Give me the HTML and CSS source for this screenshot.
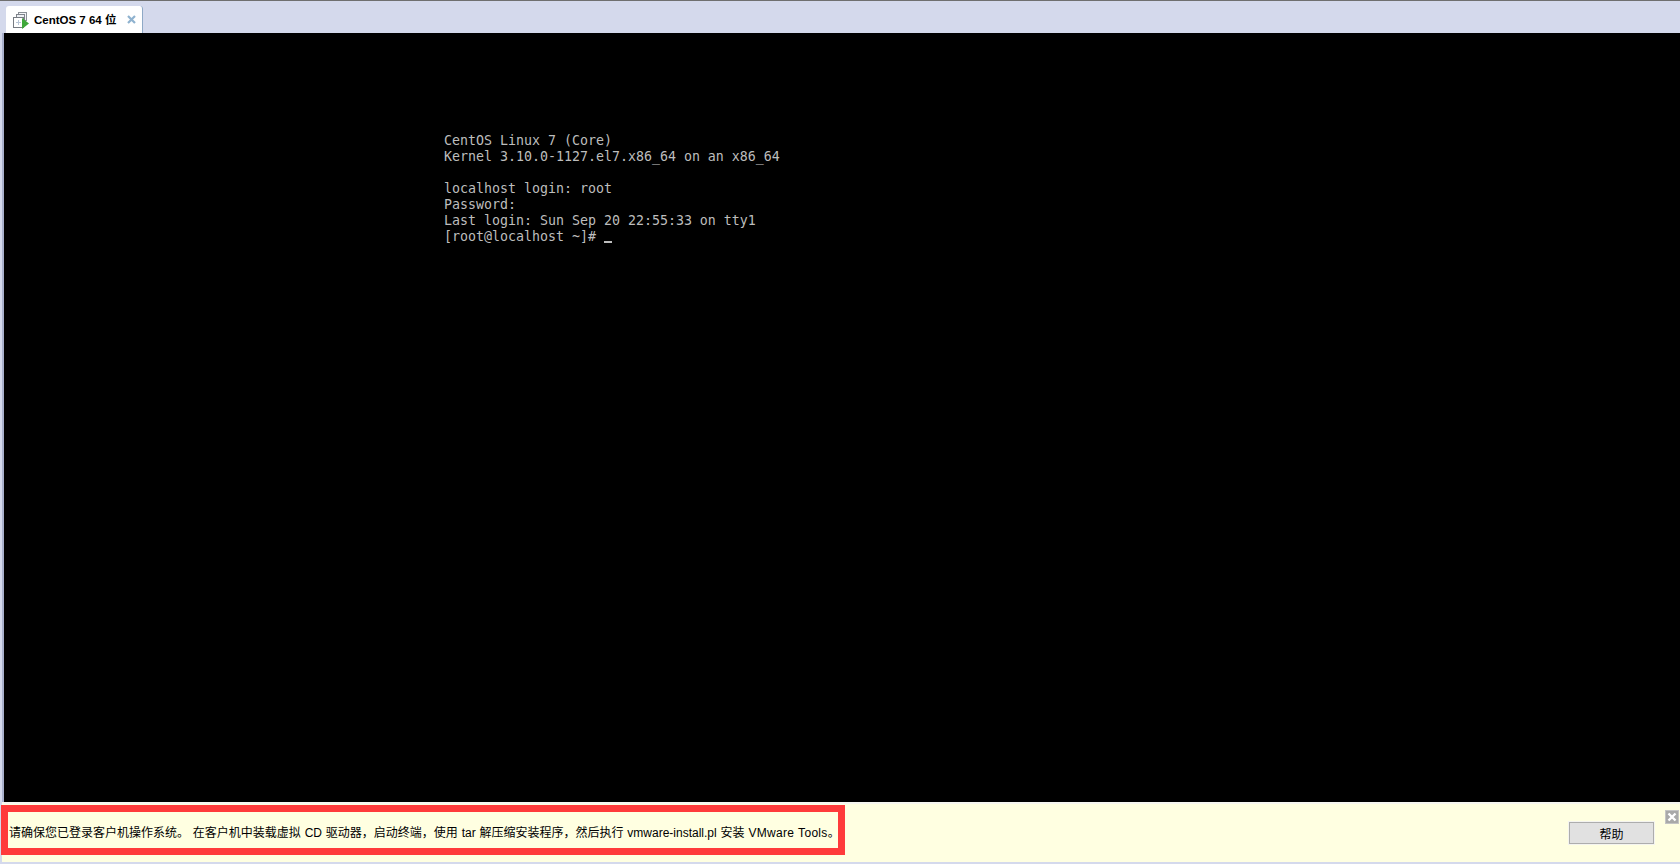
FILE: index.html
```html
<!DOCTYPE html>
<html lang="zh-CN">
<head>
<meta charset="utf-8">
<title>CentOS 7 64 位</title>
<link rel="stylesheet" href="styles.css">
</head>
<body>
<div class="app">
  <header class="tabstrip">
    <div class="tab">
      <svg class="tab-icon" width="16" height="17" viewBox="0 0 16 17" aria-hidden="true">
        <rect x="5.500" y="0.500" width="8" height="8" fill="#f4f5f8" stroke="#8a8f96"/>
        <rect x="3.500" y="2.500" width="8" height="8" fill="#eef0f4" stroke="#7f848b"/>
        <rect x="0.500" y="5.500" width="10" height="10" fill="#fff" stroke="#777c83"/>
        <path d="M3 10.500h5M5.500 8v5" stroke="#b9c6d6" fill="none"/>
        <path d="M9 6l7 5.500-7 5.500z" fill="#3fa83a"/>
      </svg>
      <span class="tab-title">CentOS 7 64 位</span>
      <svg class="tab-close" width="9" height="9" viewBox="0 0 9 9" aria-hidden="true">
        <path d="M1 1l7 7M8 1l-7 7" stroke="#8fb2cf" stroke-width="2.200" fill="none"/>
      </svg>
    </div>
  </header>
  <main class="screen">
    <pre class="console">CentOS Linux 7 (Core)
Kernel 3.10.0-1127.el7.x86_64 on an x86_64

localhost login: root
Password:
Last login: Sun Sep 20 22:55:33 on tty1
[root@localhost ~]# <span class="cursor"></span></pre>
  </main>
  <footer class="hintbar">
    <p class="hint">请确保您已登录客户机操作系统。 在客户机中装载虚拟 CD 驱动器，启动终端，使用 tar 解压缩安装程序，然后执行 vmware-install.pl 安装 <span class="hint-wide">VMware Tools</span>。</p>
    <button class="help" type="button">帮助</button>
    <div class="bar-close">
      <svg width="10" height="10" viewBox="0 0 10 10" aria-hidden="true">
        <path d="M1.500 1.500l7 7M8.500 1.500l-7 7" stroke="#fff" stroke-width="2.400" fill="none"/>
      </svg>
    </div>
    <div class="annotation"></div>
  </footer>
</div>
</body>
</html>
```
FILE: styles.css
```css
* { box-sizing: border-box; }
html, body { margin: 0; height: 100%; overflow: hidden; }
body { background: #d4d9ec; font-family: "Liberation Sans", "Noto Sans CJK SC", sans-serif; }
.app { height: 864px; display: flex; flex-direction: column; padding-bottom: 2px; }
.tabstrip {
  height: 33px; flex: none; background: #d4d9ec;
  border-top: 1px solid #6f6f6f;
  padding: 5px 0 0 6px; display: flex; align-items: stretch;
}
.tab {
  width: 137px; background: #fff; border-right: 1px solid #8ea9c6;
  border-radius: 3px 3px 0 0;
  display: flex; align-items: flex-start; padding: 6px 0 0 7px;
}
.tab-icon { flex: none; }
.tab-title {
  font: bold 11.5px/16px "Liberation Sans", "Noto Sans CJK SC", sans-serif;
  color: #000; margin-left: 5px; white-space: nowrap;
}
.tab-close { flex: none; margin: 3px 0 0 11px; }
.screen {
  flex: 1; background: #000; margin-left: 2px; border-left: 2px solid #a9b0cc;
  padding: 100px 0 0 440px; min-height: 0;
}
.console {
  margin: 0; color: #bdbdbd; font: 13.29px/16px "DejaVu Sans Mono", monospace;
}
.cursor {
  display: inline-block; width: 8px; height: 2px; background: #bdbdbd; vertical-align: -2px;
}
.hintbar {
  position: relative; flex: none; height: 60px; background: #ffffe1; margin-left: 2px;
  border-top: 2px solid #f6f6f0; padding-left: 7px;
  display: flex; align-items: center;
}
.hint {
  margin: 0; flex: 1; font: 12px/16px "Liberation Sans", "Noto Sans CJK SC", sans-serif;
  color: #000; white-space: nowrap; word-spacing: 0.5px;
}
.hint-wide { letter-spacing: 0.3px; }
.help {
  flex: none; width: 85px; height: 22px; margin: 0 26px 0 0; padding: 0;
  background: #e1e1e1; border: 1px solid #adadad; outline: 1px solid #f4f4f0;
  font: 12px "Noto Sans CJK SC", sans-serif; color: #000;
}
.bar-close {
  position: absolute; right: 1px; top: 6px; width: 14px; height: 14px;
  background: #a9a9a9; border: 1px solid #c4c4c4;
  display: flex; align-items: center; justify-content: center;
}
.annotation {
  position: absolute; left: -1px; top: 1px; width: 844px; height: 50px;
  border: 7px solid #ff3b3b; pointer-events: none;
}
```
